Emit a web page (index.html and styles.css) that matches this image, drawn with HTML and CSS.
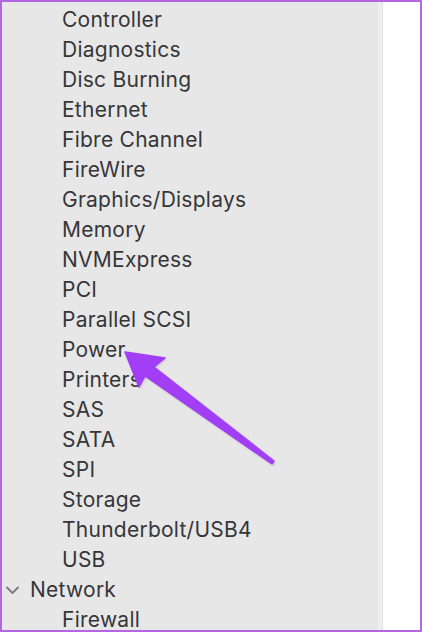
FILE: index.html
```html
<!DOCTYPE html>
<html lang="en">
<head>
<meta charset="UTF-8" />
<meta name="viewport" content="width=device-width, initial-scale=1" />
<title>System Information</title>
<link rel="stylesheet" href="styles.css">
</head>
<body>
<div class="frame">
  <aside class="sidebar">
    <ul class="tree">
      <li class="child">Controller</li>
      <li class="child">Diagnostics</li>
      <li class="child">Disc Burning</li>
      <li class="child">Ethernet</li>
      <li class="child">Fibre Channel</li>
      <li class="child">FireWire</li>
      <li class="child">Graphics/Displays</li>
      <li class="child">Memory</li>
      <li class="child">NVMExpress</li>
      <li class="child">PCI</li>
      <li class="child">Parallel SCSI</li>
      <li class="child">Power</li>
      <li class="child">Printers</li>
      <li class="child">SAS</li>
      <li class="child">SATA</li>
      <li class="child">SPI</li>
      <li class="child">Storage</li>
      <li class="child">Thunderbolt/USB4</li>
      <li class="child">USB</li>
      <li class="group">
        <svg class="chevron" width="15" height="10" viewBox="0 0 15 10"><path d="M2 2.5 L7.5 8 L13 2.5" fill="none" stroke="#7a7a7c" stroke-width="1.8" stroke-linecap="round" stroke-linejoin="round"/></svg>
        Network
      </li>
      <li class="child">Firewall</li>
    </ul>
  </aside>
  <div class="divider"></div>
  <main class="content"></main>

  <svg class="arrow" width="422" height="632" viewBox="0 0 422 632">
    <polygon points="125,352 165,358 154,367 274,461 272,464 145,376 139,387" fill="#a23ef5" stroke="#a23ef5" stroke-width="1.5" stroke-linejoin="round"/>
  </svg>
</div>
</body>
</html>
```

FILE: styles.css
```css
html, body {
  margin: 0;
  padding: 0;
}
body {
  font-family: Inter, "Noto Sans", sans-serif;
  background: #fff;
}
.frame {
  position: relative;
  width: 422px;
  height: 632px;
  box-sizing: border-box;
  border: 2px solid #b565e3;
  display: flex;
  overflow: hidden;
}
.sidebar {
  width: 376px;
  background: #e7e7e8;
}
.divider {
  width: 4px;
  background: #efeff0;
  border-right: 1px solid #e2e2e3;
}
.content {
  flex: 1;
  background: #fff;
}
.tree {
  list-style: none;
  margin: 0;
  padding: 3px 0 0;
}
.tree li {
  height: 30px;
  line-height: 30px;
  font-size: 21px;
  letter-spacing: 0.25px;
  color: #363638;
  white-space: nowrap;
  display: flex;
  align-items: center;
}
.child {
  padding-left: 60px;
}
.group {
  padding-left: 3px;
  gap: 10px;
}
.chevron {
  flex: none;
}
.arrow {
  position: absolute;
  left: -2px;
  top: -2px;
  pointer-events: none;
  filter: drop-shadow(1px 1px 1px rgba(0,0,0,0.15));
}
```
